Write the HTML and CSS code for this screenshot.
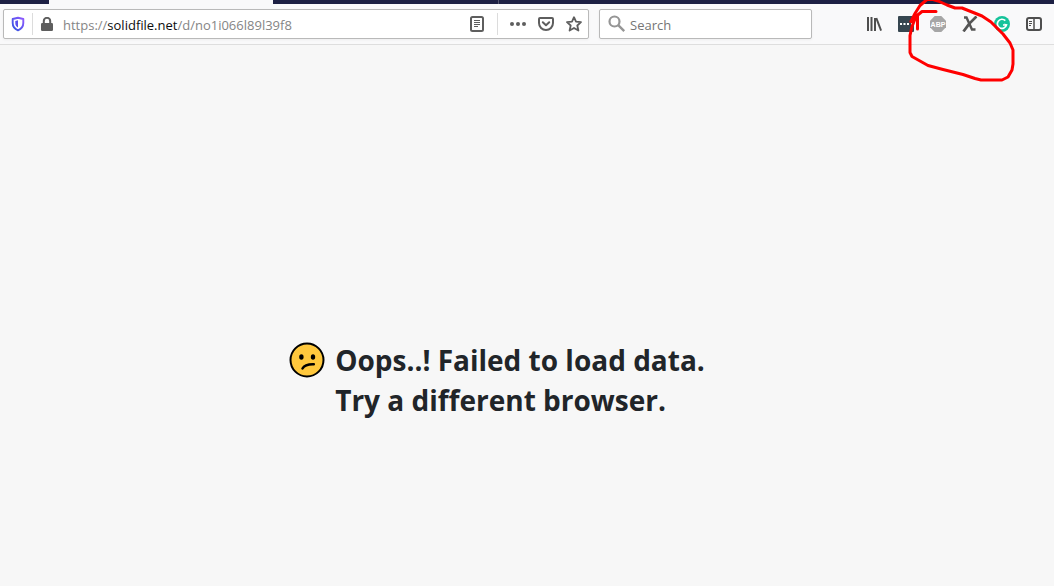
FILE: index.html
```html
<!DOCTYPE html>
<html lang="en">
<head>
<meta charset="utf-8">
<meta name="viewport" content="width=device-width, initial-scale=1">
<title>solidfile.net</title>
<link rel="stylesheet" href="styles.css">
</head>
<body>
<div class="tabs"><div class="tab tab-first"></div><div class="tab tab-active"></div><div class="tab tab-next"></div></div>
<header class="toolbar">
  <div class="field address">
    <button class="icon shield" aria-label="Tracking protection">
      <svg width="14" height="16" viewBox="0 0 14 16" fill="none"><defs><linearGradient id="sh" x1="1" y1="0" x2="0" y2="1"><stop offset="0" stop-color="#9059ff"/><stop offset="1" stop-color="#2f55e0"/></linearGradient></defs><path d="M7 1.800 12.300 3v4c0 3.600-1.800 5.900-5.300 7.300C3.500 12.900 1.700 10.600 1.700 7V3Z" stroke="url(#sh)" stroke-width="1.900" stroke-linejoin="round"/><path d="M7 4.300v7.300C5.200 10.500 4.300 9 4.300 7V4.900Z" fill="#5a50ee"/></svg>
    </button>
    <span class="divider"></span>
    <button class="icon lock" aria-label="Site information">
      <svg width="12" height="14" viewBox="0 0 12 14"><path d="M2.800 7V4a3.200 3.200 0 0 1 6.400 0v3" fill="none" stroke="#5e5e5e" stroke-width="2"/><rect y="6" width="12" height="8" rx="1.200" fill="#5e5e5e"/></svg>
    </button>
    <div class="url" role="textbox" aria-label="Address" contenteditable="true" spellcheck="false">https://<span class="host">solidfile.net</span>/d/no1i066l89l39f8</div>
    <button class="icon reader" aria-label="Reader view">
      <svg width="14" height="16" viewBox="0 0 14 16" fill="none" stroke="#5e5e5e"><rect x="1" y="1" width="12" height="14" rx="1.500" stroke-width="2"/><path d="M4 4.500h6M4 6.500h6M4 8.500h6M4 10.500h4"/></svg>
    </button>
    <span class="divider"></span>
    <div class="actions">
      <button class="icon" aria-label="Page actions"><svg width="16" height="16" viewBox="0 0 16 16" fill="#5e5e5e"><circle cx="2" cy="8" r="2"/><circle cx="8" cy="8" r="2"/><circle cx="14" cy="8" r="2"/></svg></button>
      <button class="icon" aria-label="Save to Pocket"><svg width="16" height="16" viewBox="0 0 16 16" fill="none" stroke="#5e5e5e" stroke-width="2" stroke-linecap="round" stroke-linejoin="round"><path d="M2 2h12c.6 0 1 .4 1 1v4a7 7 0 0 1-14 0V3c0-.6.4-1 1-1Z"/><path d="m4.800 6.300 3.200 3 3.200-3"/></svg></button>
      <button class="icon" aria-label="Bookmark"><svg width="16" height="16" viewBox="0 0 16 16" fill="none" stroke="#5e5e5e" stroke-width="1.800" stroke-linejoin="round"><path d="m8 1.200 2 4.500 5 .5-3.700 3.300 1.100 5L8 12l-4.400 2.500 1.100-5L1 6.200l5-.5Z"/></svg></button>
    </div>
  </div>
  <label class="field search">
    <svg width="18" height="18" viewBox="0 0 18 18" fill="none" stroke="#959595"><circle cx="6.500" cy="6.500" r="5" stroke-width="2.200"/><path d="m10.200 10.200 6 6" stroke-width="2.400"/></svg>
    <input class="search-input" type="text" placeholder="Search" aria-label="Search">
  </label>
  <nav class="extensions" aria-label="Toolbar">
    <button class="icon" aria-label="Library"><svg width="16" height="16" viewBox="0 0 16 16" fill="none" stroke="#4e4e4e" stroke-width="2"><path d="M2 1v14M5.500 1v14M9 2v13"/><path d="m10.300 2 4.800 12.700"/></svg></button>
    <button class="icon" aria-label="Password manager"><svg width="16" height="16" viewBox="0 0 16 16"><rect width="16" height="16" rx="1" fill="#364650"/><path d="M2 7h2v2H2ZM5.500 7h2v2h-2ZM9 7h2v2H9Z" fill="#fff"/><path d="M13.500 6v4" stroke="#fff"/></svg></button>
    <button class="icon" aria-label="Adblock Plus"><svg width="16" height="16" viewBox="0 0 16 16"><path d="M4.700 0h6.600L16 4.700v6.600L11.300 16H4.700L0 11.300V4.700Z" fill="#a6a6a6"/><text class="abp" x="8" y="11" text-anchor="middle">ABP</text></svg></button>
    <button class="icon" aria-label="X extension"><svg width="16" height="16" viewBox="0 0 16 16" fill="none" stroke="#555"><path d="M2 1.500h2.500l5.500 12h3.500" stroke-width="2.400"/><path d="M14.500.5C11 3.500 5.500 9 1.500 15.500" stroke-width="2.700"/></svg></button>
    <button class="icon" aria-label="Grammarly"><svg width="16" height="16" viewBox="0 0 16 16"><circle cx="8" cy="8" r="8" fill="#15c39a"/><path d="M11.300 4.700A4.600 4.600 0 1 0 12.400 9H9" fill="none" stroke="#fff" stroke-width="1.700"/><path d="m10.200 7.500 3.200 1-1.800 2.500Z" fill="#fff"/></svg></button>
    <button class="icon" aria-label="Sidebars"><svg width="16" height="16" viewBox="0 0 16 16" fill="none" stroke="#4e4e4e"><rect x="1" y="2" width="14" height="12" rx="2" stroke-width="2"/><path d="M8 2v12" stroke-width="1.500"/><path d="M3 5.500h3M3 7.500h3M3 9.500h2"/></svg></button>
  </nav>
</header>
<main class="page">
  <h1 class="message">
    <svg class="face" width="36" height="36" viewBox="0 0 36 36" role="img" aria-label="Confused face"><circle cx="18" cy="18" r="16.500" fill="#ffc83d" stroke="#000" stroke-width="2"/><ellipse cx="12.400" cy="15" rx="2.200" ry="2.800"/><ellipse cx="24" cy="15" rx="2.200" ry="2.800"/><path d="M13.500 26.500c1.800-3.300 4.500-4.400 11.300-4.200" fill="none" stroke="#000" stroke-width="2.500" stroke-linecap="round"/></svg>
    <span>Oops..! Failed to load data.<br>Try a different browser.</span>
  </h1>
</main>
<svg class="scribble" width="150" height="90" viewBox="904 0 150 90" fill="none" stroke="#f00" stroke-width="3" stroke-linecap="round" stroke-linejoin="round" aria-hidden="true"><path d="M936 11.500h-14l-6 5-4 10-2 9v17l2 4 16 9 15 4 20 5 12 4 6 1.500h21l6-3 4-7 1-6V50l-3-7-7-9-12-12-9-6-10-4-10-4h-7l-8-3-9-4-5-1.500h-6l-7 6-5 8-4 8"/><path d="M917.500 15v14"/></svg>
</body>
</html>
```
FILE: styles.css
```css
* { box-sizing: border-box; }
body {
  margin: 0;
  min-height: 100vh;
  display: flex;
  flex-direction: column;
  position: relative;
  background: #f7f7f7;
  color: #212529;
  font-family: "Open Sans", "Noto Sans", sans-serif;
}
.tabs { display: flex; height: 4px; }
.tab { background: #1d2044; }
.tab-first { width: 49px; }
.tab-active { width: 224px; background: #f9f9fa; }
.tab-next { flex: 1; background: linear-gradient(#55576f, #55576f) 225px 0 / 1px 4px no-repeat #1d2044; }
.toolbar {
  display: flex;
  align-items: center;
  height: 41px;
  padding: 0 12px 0 3px;
  border-bottom: 1px solid #dedede;
  background: #f9f9fa;
}
.field {
  display: flex;
  align-items: center;
  height: 30px;
  border: 1px solid #b9b9b9;
  border-radius: 2px;
  background: #fff;
  box-shadow: 0 1px 3px #0000000d;
}
.address { flex: 1; min-width: 0; padding-right: 6px; }
.icon {
  display: flex;
  flex: none;
  padding: 0;
  border: 0;
  background: none;
}
.shield { margin: 0 7px; }
.divider { width: 1px; height: 22px; background: #dcdcdc; }
.lock { margin: 0 10px 0 8px; }
.url {
  flex: 1;
  min-width: 0;
  overflow: hidden;
  padding-top: 2px;
  color: #858585;
  font-size: 13px;
  line-height: 20px;
  white-space: nowrap;
  outline: 0;
}
.host { color: #0c0c0d; }
.reader { margin-right: 13px; }
.actions { display: flex; gap: 12px; margin-left: 12px; }
.search { width: 213px; margin-left: 10px; padding-left: 8px; gap: 4px; }
.search-input {
  flex: 1;
  min-width: 0;
  border: 0;
  padding: 2px 0 0;
  outline: 0;
  background: none;
  font: 13px/20px "Open Sans", "Noto Sans", sans-serif;
}
.search-input::placeholder { color: #757575; opacity: 1; }
.extensions { display: flex; gap: 16px; margin-left: 54px; }
.abp { font: bold 7px "Liberation Sans", sans-serif; fill: #fff; }
.page {
  flex: 1;
  display: flex;
  align-items: center;
  justify-content: center;
  padding: 128px 60px 0 0;
}
.message {
  display: flex;
  gap: 10px;
  margin: 0;
  font-size: 28px;
  font-weight: 700;
  line-height: 40px;
}
.face { flex: none; margin-top: 2px; }
.scribble { position: absolute; top: 0; right: 0; pointer-events: none; }
```
